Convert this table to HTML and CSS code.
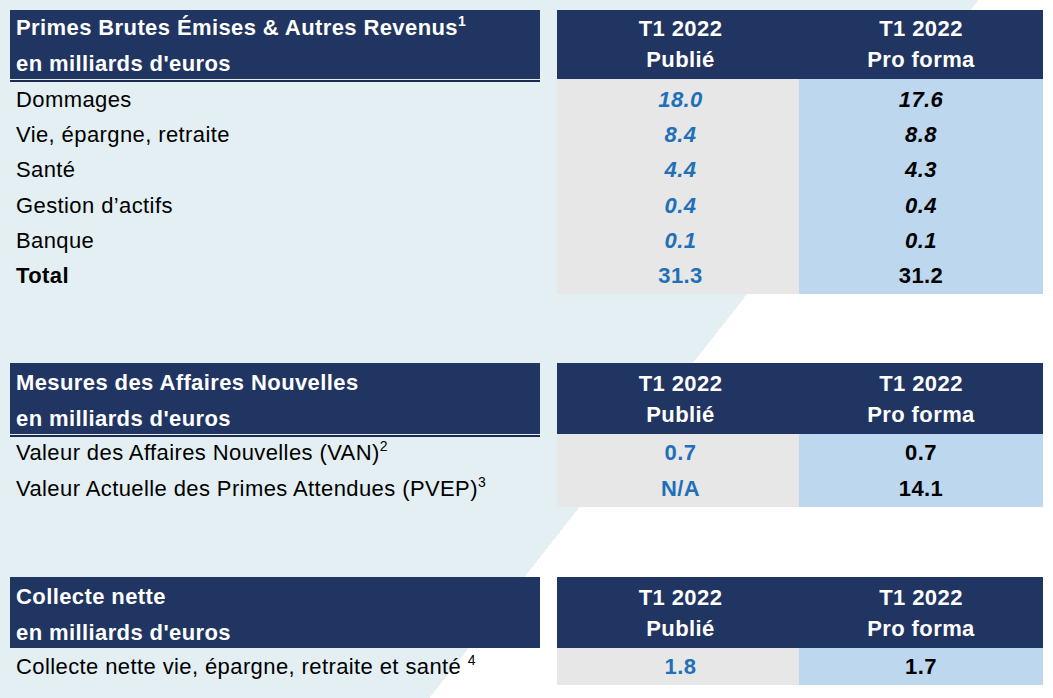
FILE: index.html
```html
<!DOCTYPE html>
<html lang="fr">
<head>
<meta charset="utf-8">
<title>Chiffres clés T1 2022</title>
<link rel="stylesheet" href="styles.css">
</head>
<body>
<main class="sheet">
  <section class="tbl t1">
    <div class="col col-label">
      <div class="head head-left">
        <div class="hl">Primes Brutes Émises &amp; Autres Revenus<sup>1</sup></div>
        <div class="hl">en milliards d'euros</div>
      </div>
      <div class="body">
        <div class="row"><span>Dommages</span></div>
        <div class="row"><span>Vie, épargne, retraite</span></div>
        <div class="row"><span>Santé</span></div>
        <div class="row"><span>Gestion d’actifs</span></div>
        <div class="row"><span>Banque</span></div>
        <div class="row total"><span>Total</span></div>
      </div>
    </div>
    <div class="col col-pub">
      <div class="head head-num"><div class="hn">T1 2022</div><div class="hn">Publié</div></div>
      <div class="body">
        <div class="row it">18.0</div>
        <div class="row it">8.4</div>
        <div class="row it">4.4</div>
        <div class="row it">0.4</div>
        <div class="row it">0.1</div>
        <div class="row">31.3</div>
      </div>
    </div>
    <div class="col col-pro">
      <div class="head head-num"><div class="hn">T1 2022</div><div class="hn">Pro forma</div></div>
      <div class="body">
        <div class="row it">17.6</div>
        <div class="row it">8.8</div>
        <div class="row it">4.3</div>
        <div class="row it">0.4</div>
        <div class="row it">0.1</div>
        <div class="row">31.2</div>
      </div>
    </div>
  </section>

  <section class="tbl t2">
    <div class="col col-label">
      <div class="head head-left">
        <div class="hl">Mesures des Affaires Nouvelles</div>
        <div class="hl">en milliards d'euros</div>
      </div>
      <div class="body">
        <div class="row"><span>Valeur des Affaires Nouvelles (VAN)<sup>2</sup></span></div>
        <div class="row"><span>Valeur Actuelle des Primes Attendues (PVEP)<sup>3</sup></span></div>
      </div>
    </div>
    <div class="col col-pub">
      <div class="head head-num"><div class="hn">T1 2022</div><div class="hn">Publié</div></div>
      <div class="body">
        <div class="row">0.7</div>
        <div class="row">N/A</div>
      </div>
    </div>
    <div class="col col-pro">
      <div class="head head-num"><div class="hn">T1 2022</div><div class="hn">Pro forma</div></div>
      <div class="body">
        <div class="row">0.7</div>
        <div class="row">14.1</div>
      </div>
    </div>
  </section>

  <section class="tbl t3">
    <div class="col col-label">
      <div class="head head-left no-rule">
        <div class="hl">Collecte nette</div>
        <div class="hl">en milliards d'euros</div>
      </div>
      <div class="body">
        <div class="row"><span>Collecte nette vie, épargne, retraite et santé <sup>4</sup></span></div>
      </div>
    </div>
    <div class="col col-pub">
      <div class="head head-num"><div class="hn">T1 2022</div><div class="hn">Publié</div></div>
      <div class="body">
        <div class="row">1.8</div>
      </div>
    </div>
    <div class="col col-pro">
      <div class="head head-num"><div class="hn">T1 2022</div><div class="hn">Pro forma</div></div>
      <div class="body">
        <div class="row">1.7</div>
      </div>
    </div>
  </section>
</main>
</body>
</html>
```

FILE: styles.css
```css
html, body {
  margin: 0;
  padding: 0;
}
body {
  width: 1053px;
  height: 698px;
  overflow: hidden;
  font-family: "Liberation Sans", Arial, sans-serif;
  font-size: 22px;
  letter-spacing: 0.4px;
  color: #000;
  background: linear-gradient(128.2deg, #e3eff2 769px, #ffffff 769px);
}
.sheet {
  display: flex;
  flex-direction: column;
  padding: 10px 0 0 10px;
}
.tbl {
  display: flex;
}
.t2 { margin-top: 69px; }
.t3 { margin-top: 70px; }

.col {
  display: flex;
  flex-direction: column;
}
.col-label { width: 530px; margin-right: 17px; }
.col-pub { width: 242px; }
.col-pro { width: 244px; }

.head {
  background: #213562;
  color: #fff;
  font-weight: bold;
  box-sizing: border-box;
  height: 69px;
}
.t2 .head, .t3 .head { height: 71px; }

.head-left {
  position: relative;
  padding-left: 6px;
}
.head-left::after {
  content: "";
  position: absolute;
  left: 0;
  right: 0;
  bottom: -3px;
  height: 2px;
  background: #1b2a4e;
}
.head-left.no-rule::after { display: none; }
.hl {
  line-height: 36px;
  height: 36px;
  white-space: nowrap;
}
.t2 .head-left, .t3 .head-left { padding-top: 2px; }

.head-num {
  text-align: center;
  padding-top: 3px;
}
.t2 .head-num, .t3 .head-num { padding-top: 5px; }
.hn {
  line-height: 31px;
  height: 31px;
}

sup {
  font-size: 14px;
  line-height: 0;
  vertical-align: 9px;
  letter-spacing: 0;
}

.body {
  padding-top: 3px;
}
.t2 .body, .t3 .body { padding-top: 1px; }
.t1 .row { height: 35.3px; }
.t2 .row, .t3 .row { height: 36px; }
.row {
  display: flex;
  align-items: center;
  white-space: nowrap;
}
.col-label .row { padding-left: 6px; }
.row.total { font-weight: bold; }

.col-pub .body { background: #e7e7e7; }
.col-pro .body { background: #bdd7ee; }
.col-pub .row, .col-pro .row {
  justify-content: center;
  font-weight: bold;
}
.col-pub .row, .col-pub .hn { padding-left: 5px; }
.col-pub .row { color: #1f6fb9; }
.col-pro .row { color: #000; }
.row.it { font-style: italic; }
```
